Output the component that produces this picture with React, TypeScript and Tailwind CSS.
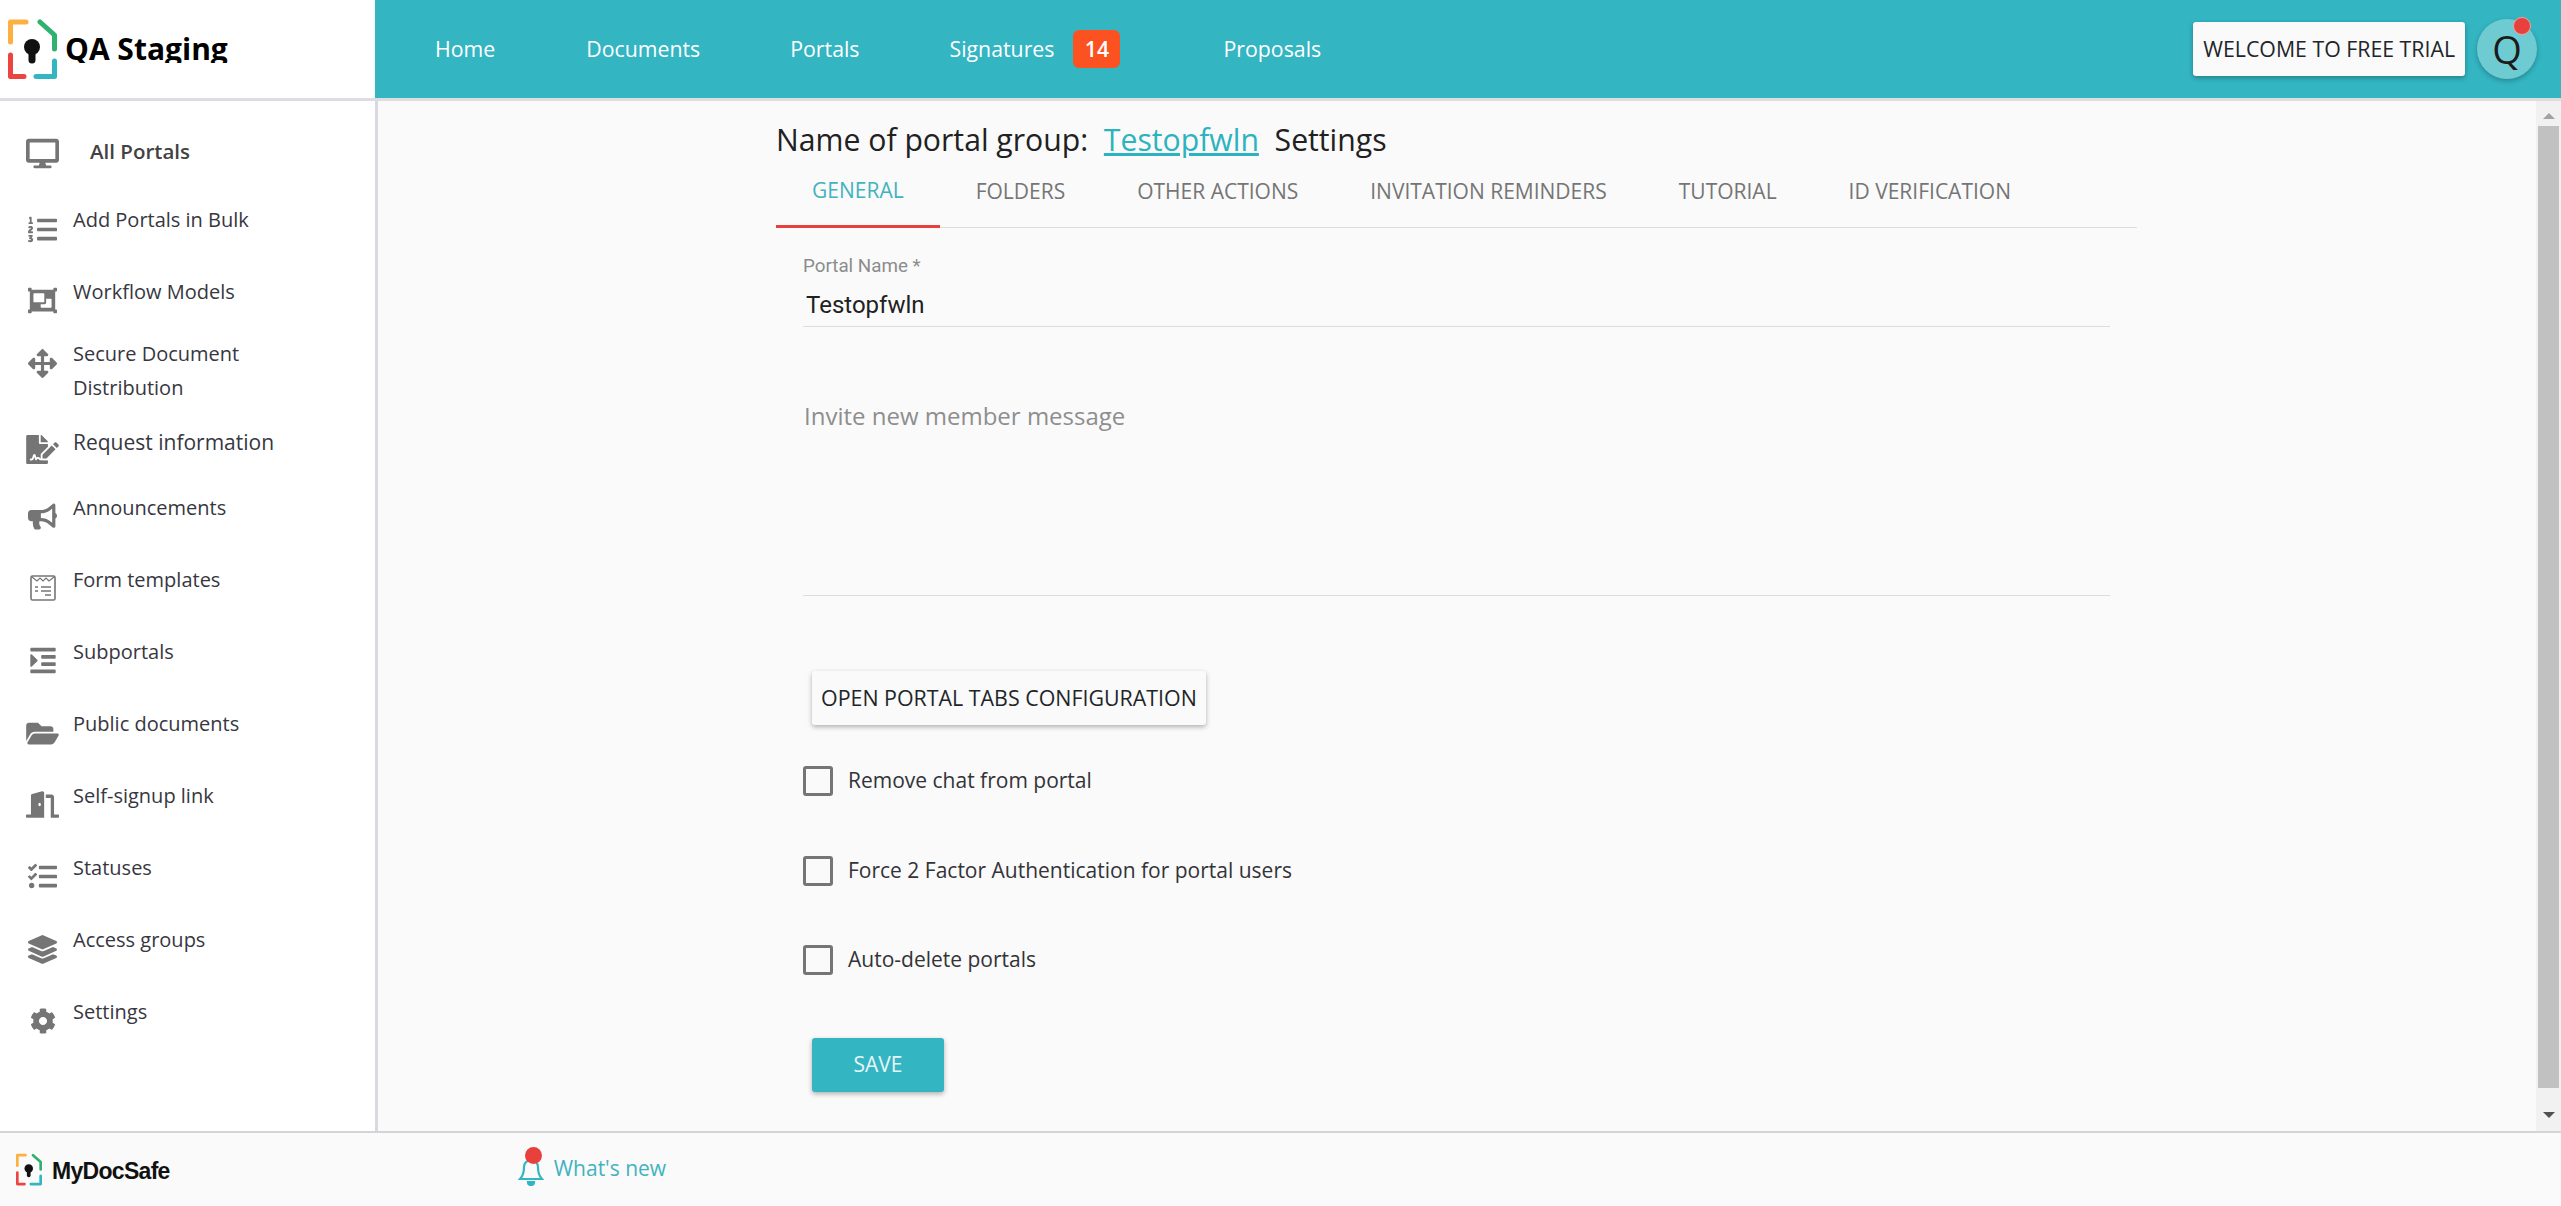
import type { ReactNode } from 'react';
import {
  FaArrowsAlt,
  FaBullhorn,
  FaCog,
  FaDesktop,
  FaDoorOpen,
  FaFileSignature,
  FaFolderOpen,
  FaIndent,
  FaLayerGroup,
  FaListOl,
  FaObjectGroup,
  FaTasks,
} from 'react-icons/fa';

const Logo = ({ className }: { className: string }) => (
  <svg viewBox="0 0 49 60" className={className} fill="none" strokeWidth="5" strokeLinecap="round" strokeLinejoin="round">
    <path d="M2.5 23V3H18" stroke="#fbb040" />
    <path d="M32 3L46.5 16V30" stroke="#2fb170" />
    <path d="M2.5 36V57.5H16" stroke="#ec4440" />
    <path d="M28 57.5H46.5V42" stroke="#33b5c2" />
    <circle cx="24" cy="28" r="8" fill="#111" />
    <path d="M24 30V41" stroke="#111" strokeWidth="7" />
  </svg>
);

const FormIcon = () => (
  <svg viewBox="0 0 26 26" className="w-[26px] h-[26px]" fill="none" stroke="#757575">
    <rect x="1" y="1" width="24" height="24" rx="1.5" strokeWidth="1.6" />
    <path d="M2 2l5 4 3-3 3 3 3-3 3 3 5-4" strokeWidth="1.2" />
    <path d="M5 12h3M11 12h10M5 16h3M11 16h10M15 20h6" strokeWidth="1.6" />
  </svg>
);

const navItems: { label: string; icon: ReactNode; row: string; icon_mt: string; bold?: boolean; big?: boolean }[] = [
  { label: 'All Portals', icon: <FaDesktop className="w-[33px] h-[33px]" />, row: 'h-[68px]', icon_mt: 'mt-px', bold: true },
  { label: 'Add Portals in Bulk', icon: <FaListOl className="w-[29px] h-[29px]" />, row: 'h-[72px]', icon_mt: 'mt-[9px]' },
  { label: 'Workflow Models', icon: <FaObjectGroup className="w-[29px] h-[29px]" />, row: 'h-[62px]', icon_mt: 'mt-[8px]' },
  { label: 'Secure Document Distribution', icon: <FaArrowsAlt className="w-[29px] h-[29px]" />, row: 'h-[89px]', icon_mt: 'mt-[9px]' },
  { label: 'Request information', icon: <FaFileSignature className="w-[33px] h-[29px]" />, row: 'h-[65px]', icon_mt: 'mt-[6px]', big: true },
  { label: 'Announcements', icon: <FaBullhorn className="w-[29px] h-[29px]" />, row: 'h-[72px]', icon_mt: 'mt-[8px]' },
  { label: 'Form templates', icon: <FormIcon />, row: 'h-[72px]', icon_mt: 'mt-[8px]' },
  { label: 'Subportals', icon: <FaIndent className="w-[26px] h-[29px]" />, row: 'h-[72px]', icon_mt: 'mt-[8px]' },
  { label: 'Public documents', icon: <FaFolderOpen className="w-[33px] h-[29px]" />, row: 'h-[72px]', icon_mt: 'mt-[9px]' },
  { label: 'Self-signup link', icon: <FaDoorOpen className="w-[36px] h-[29px]" />, row: 'h-[72px]', icon_mt: 'mt-[8px]' },
  { label: 'Statuses', icon: <FaTasks className="w-[29px] h-[29px]" />, row: 'h-[72px]', icon_mt: 'mt-[8px]' },
  { label: 'Access groups', icon: <FaLayerGroup className="w-[29px] h-[29px]" />, row: 'h-[72px]', icon_mt: 'mt-[9px]' },
  { label: 'Settings', icon: <FaCog className="w-[26px] h-[26px]" />, row: 'h-[72px]', icon_mt: 'mt-[9px]' },
];

const tabs = ['GENERAL', 'FOLDERS', 'OTHER ACTIONS', 'INVITATION REMINDERS', 'TUTORIAL', 'ID VERIFICATION'];

const checks = [
  { label: 'Remove chat from portal', cls: 'mt-[41px]' },
  { label: 'Force 2 Factor Authentication for portal users', cls: 'mt-[60px]' },
  { label: 'Auto-delete portals', cls: 'mt-[59px]' },
];

export default function App() {
  return (
    <div className="flex flex-col h-screen overflow-hidden font-['Open_Sans',sans-serif] text-[#212529] bg-[#fafafa]">
      {/* Top bar */}
      <header className="flex h-[101px] shrink-0 border-b-[3px] border-[#dcdde1]">
        <div className="flex items-center w-[375px] bg-white pl-[8px]">
          <Logo className="w-[49px] h-[60px]" />
          <div className="ml-[8px] h-[28px] overflow-hidden text-[30px] leading-[28px] font-bold text-black">QA Staging</div>
        </div>
        <nav className="flex flex-1 items-center bg-[#33b5c2] text-white text-[21.3px]">
          <span className="ml-[60px]">Home</span>
          <span className="ml-[91px]">Documents</span>
          <span className="ml-[90px]">Portals</span>
          <span className="ml-[90px]">Signatures</span>
          <span className="ml-[19px] w-[47px] h-[38px] flex items-center justify-center rounded-[6px] bg-[#fc5221] font-semibold">14</span>
          <span className="ml-[103px]">Proposals</span>
          <button className="ml-auto h-[54px] px-[10px] rounded-[3px] bg-[#fafafa] text-[21.3px] text-[#212529] shadow-[0_2px_5px_rgba(0,0,0,0.3)]">WELCOME TO FREE TRIAL</button>
          <div className="relative ml-[12px] mr-[24px] w-[60px] h-[60px] rounded-full bg-[#6fcbd2] flex items-center justify-center text-[38px] text-[#1b1b1b] shadow-[0_2px_5px_rgba(0,0,0,0.25)]">
            Q
            <span className="absolute -top-[2px] right-[6px] w-[18px] h-[18px] rounded-full bg-[#e8403c] border border-[#f5a09e]" />
          </div>
        </nav>
      </header>

      <div className="flex flex-1 min-h-0">
        {/* Sidebar */}
        <aside className="w-[378px] shrink-0 bg-white border-r-[3px] border-[#d8d8de] pt-[34px] pl-[26px] text-[20px] leading-[34px]">
          {navItems.map((item) => (
            <div key={item.label} className={`flex ${item.row}`}>
              <div className={`flex items-center justify-center w-[33px] h-[34px] shrink-0 text-[#757575] ${item.icon_mt}`}>{item.icon}</div>
              {item.bold ? (
                <span className="ml-[31px] -mt-px text-[20.5px] font-semibold text-[#424242]">{item.label}</span>
              ) : (
                <span className={`ml-[14px] w-[220px] text-[#37373f] ${item.big ? '-mt-px text-[21px]' : ''}`}>{item.label}</span>
              )}
            </div>
          ))}
        </aside>

        {/* Main content */}
        <main className="flex-1 min-w-0 pl-[398px] pr-[399px]">
          <h1 className="mt-[20px] text-[30.2px] leading-[38px] text-[#212121] whitespace-pre">
            Name of portal group:{'  '}
            <span className="text-[#2cb3c0] underline underline-offset-2">Testopfwln</span>
            {'  '}Settings
          </h1>

          <div className="flex mt-[9px] h-[60px] border-b border-[#dddddd] text-[21px]">
            {tabs.map((t, i) => (
              <div
                key={t}
                className={`flex items-center px-[36px] h-[60px] pb-[12px] ${
                  i === 0 ? 'text-[#41b3bf] border-b-[3px] border-[#e8403c]' : 'text-[#757575]'
                }`}
              >
                {t}
              </div>
            ))}
          </div>

          <div className="pl-[27px] pr-[27px]">
            <label className="block mt-[27px] font-['Roboto',sans-serif] text-[18.8px] leading-[22px] text-[#8c8c8c]">Portal Name *</label>
            <div className="mt-[11px] h-[39px] pl-[3px] border-b border-[#dddddd] font-['Roboto',sans-serif] text-[24px] leading-[34px] text-[#212121]">Testopfwln</div>

            <div className="mt-[70px] h-[199px] pl-px border-b border-[#dddddd] text-[24px] leading-[38px] text-[#8e8e8e]">Invite new member message</div>

            <button className="block mt-[75px] ml-[9px] h-[54px] px-[9px] rounded-[3px] bg-[#fafafa] text-[21.4px] text-[#212529] shadow-[0_2px_5px_rgba(0,0,0,0.3)]">OPEN PORTAL TABS CONFIGURATION</button>

            {checks.map((c) => (
              <div key={c.label} className={`flex items-center h-[30px] ${c.cls}`}>
                <span className="w-[30px] h-[30px] rounded-[3px] border-[3px] border-[#757575]" />
                <span className="ml-[15px] text-[21px] text-[#333338]">{c.label}</span>
              </div>
            ))}

            <button className="block mt-[63px] ml-[9px] w-[132px] h-[54px] rounded-[3px] bg-[#33b5c2] text-[21px] text-[#e6f6f8] shadow-[0_2px_5px_rgba(0,0,0,0.3)]">SAVE</button>
          </div>
        </main>

        {/* Scrollbar */}
        <div className="flex flex-col items-center w-[25px] shrink-0 bg-[#f1f1f1]">
          <svg viewBox="0 0 12 6" className="w-[12px] h-[6px] mt-[12px] fill-[#a3a3a3]"><path d="M6 0l6 6H0z" /></svg>
          <div className="mt-[7px] w-[21px] h-[962px] bg-[#c1c1c1]" />
          <svg viewBox="0 0 12 6" className="w-[12px] h-[6px] mt-[24px] fill-[#505050]"><path d="M0 0h12L6 6z" /></svg>
        </div>
      </div>

      {/* Footer */}
      <footer className="flex items-center h-[75px] shrink-0 border-t-[2px] border-[#d4d4d8] bg-[#fafafa]">
        <Logo className="ml-[16px] w-[26px] h-[33px]" />
        <span className="ml-[10px] mt-[4px] font-['Liberation_Sans',sans-serif] font-bold text-[23px] tracking-[-0.7px] text-[#111]">MyDocSafe</span>
        <div className="relative ml-[348px] mb-[2px] flex items-center">
          <svg viewBox="0 0 26 34" className="w-[26px] h-[34px]" fill="none" stroke="#33b5c2" strokeWidth="2.2">
            <path d="M2 27c3-3 4-6 4-12a7 7 0 0 1 14 0c0 6 1 9 4 12z" />
            <path d="M10 30a3 3 0 0 0 6 0z" fill="#33b5c2" />
          </svg>
          <span className="absolute left-[7px] top-[-5px] w-[17px] h-[17px] rounded-full bg-[#e8403c]" />
          <span className="ml-[10px] text-[21px] text-[#41b3bf]">What's new</span>
        </div>
      </footer>
    </div>
  );
}
